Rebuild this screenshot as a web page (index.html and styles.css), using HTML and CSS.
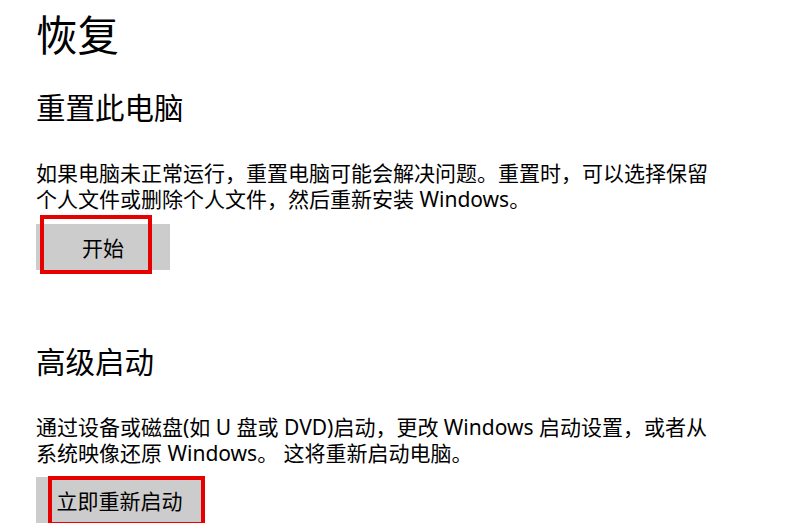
FILE: index.html
```html
<!DOCTYPE html>
<html lang="zh-CN">
<head>
    <meta charset="UTF-8">
    <meta name="viewport" content="width=device-width, initial-scale=1.0">
    <title>恢复</title>
    <link rel="stylesheet" href="styles.css">
</head>
<body>
    <div class="page">
        <h1>恢复</h1>

        <!-- 重置此电脑 -->
        <div class="section">
            <h2>重置此电脑</h2>
            <p>如果电脑未正常运行，重置电脑可能会解决问题。重置时，可以选择保留个人文件或删除个人文件，然后重新安装 Windows。</p>
            <div class="btn btn-reset">
                开始
                <span class="mark mark-reset"></span>
            </div>
        </div>

        <!-- 高级启动 -->
        <div class="section section-advanced">
            <h2>高级启动</h2>
            <p>通过设备或磁盘(如 U 盘或 DVD)启动，更改 Windows 启动设置，或者从系统映像还原 Windows。 这将重新启动电脑。</p>
            <div class="btn btn-restart">
                立即重新启动
                <span class="mark mark-restart"></span>
            </div>
        </div>
    </div>
</body>
</html>
```

FILE: styles.css
```css
body {
    font-family: "Noto Sans", "Noto Sans CJK SC", sans-serif;
    background-color: #fff;
    color: #000;
    margin: 0;
    padding: 0;
}
.page {
    padding: 7px 0 0 36px;
}
h1 {
    margin: 0;
    font-size: 41.5px;
    line-height: 57px;
    font-weight: normal;
}
.section {
    margin-top: 24px;
}
.section-advanced {
    margin-top: 72px;
}
h2 {
    margin: 0;
    font-size: 29.5px;
    line-height: 40px;
    font-weight: normal;
}
p {
    margin: 32px 0 0;
    max-width: 680px;
    font-size: 21px;
    line-height: 26px;
}
.btn {
    position: relative;
    display: inline-flex;
    align-items: center;
    justify-content: center;
    margin-top: 12px;
    height: 46px;
    background-color: #ccc;
    font-size: 21px;
}
.btn-reset {
    width: 134px;
}
.btn-restart {
    width: 167px;
    margin-top: 11px;
}
.mark {
    position: absolute;
    box-sizing: border-box;
    border: 4px solid #e60000;
}
.mark-reset {
    left: 4px;
    top: -9px;
    width: 112px;
    height: 59px;
}
.mark-restart {
    left: 12px;
    top: -1px;
    width: 157px;
    height: 50px;
}
```
